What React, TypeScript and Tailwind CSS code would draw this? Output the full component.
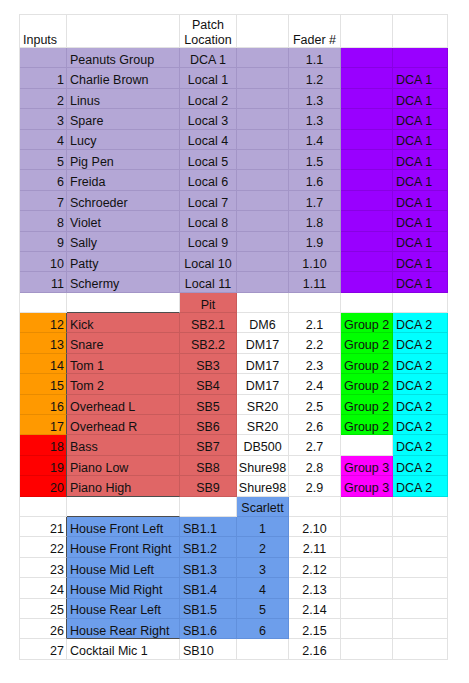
import React from "react";

type Cell = [string, string, string?, string?];

const fills: Record<string, string> = {
  W: "bg-white border-[#e2e2e2]",
  L: "bg-[#b4a7d6] border-[#a395c7]",
  P: "bg-[#9900ff] border-[#8800e3]",
  O: "bg-[#ff9900] border-[#e88b00]",
  R: "bg-[#ff0000] border-[#e60000]",
  r: "bg-[#e06666] border-[#c95b5b]",
  G: "bg-[#00ff00] border-[#00e200]",
  C: "bg-[#00ffff] border-[#00e2e2]",
  M: "bg-[#ff00ff] border-[#e200e2]",
  B: "bg-[#6d9eeb] border-[#6190dc]",
};

const aligns: Record<string, string> = {
  l: "justify-start pl-[3px]",
  r: "justify-end pr-[2px]",
  c: "justify-center",
};

const peanuts = ["Charlie Brown", "Linus", "Spare", "Lucy", "Pig Pen", "Freida", "Schroeder", "Violet", "Sally", "Patty", "Schermy"];
const peanutFaders = ["1.2", "1.3", "1.3", "1.4", "1.5", "1.6", "1.7", "1.8", "1.9", "1.10", "1.11"];

const pit = [
  { n: "12", name: "Kick", sb: "SB2.1", mic: "DM6", f: "2.1", c1: "O", grp: "Group 2", g: "G" },
  { n: "13", name: "Snare", sb: "SB2.2", mic: "DM17", f: "2.2", c1: "O", grp: "Group 2", g: "G" },
  { n: "14", name: "Tom 1", sb: "SB3", mic: "DM17", f: "2.3", c1: "O", grp: "Group 2", g: "G" },
  { n: "15", name: "Tom 2", sb: "SB4", mic: "DM17", f: "2.4", c1: "O", grp: "Group 2", g: "G" },
  { n: "16", name: "Overhead L", sb: "SB5", mic: "SR20", f: "2.5", c1: "O", grp: "Group 2", g: "G" },
  { n: "17", name: "Overhead R", sb: "SB6", mic: "SR20", f: "2.6", c1: "O", grp: "Group 2", g: "G" },
  { n: "18", name: "Bass", sb: "SB7", mic: "DB500", f: "2.7", c1: "R", grp: "", g: "W" },
  { n: "19", name: "Piano Low", sb: "SB8", mic: "Shure98", f: "2.8", c1: "R", grp: "Group 3", g: "M" },
  { n: "20", name: "Piano High", sb: "SB9", mic: "Shure98", f: "2.9", c1: "R", grp: "Group 3", g: "M" },
];

const house = ["House Front Left", "House Front Right", "House Mid Left", "House Mid Right", "House Rear Left", "House Rear Right"];

const dk = "border-r-[#4d4d4d]";
const dkb = "border-b-[#4d4d4d]";

const rows: Cell[][] = [
  [["", "L"], ["Peanuts Group", "L", "l"], ["DCA 1", "L", "c"], ["", "L"], ["1.1", "L", "c"], ["", "P"], ["", "P"]],
  ...peanuts.map((name, i): Cell[] => [
    [String(i + 1), "L", "r"],
    [name, "L", "l"],
    [`Local ${i + 1}`, "L", "c"],
    ["", "L"],
    [peanutFaders[i], "L", "c"],
    ["", "P"],
    ["DCA 1", "P", "l"],
  ]),
  [["", "W"], ["", "W", "l", dkb], ["Pit", "r", "c"], ["", "W"], ["", "W"], ["", "W"], ["", "W"]],
  ...pit.map((p, i): Cell[] => [
    [p.n, p.c1, "r", dk],
    [p.name, "r", "l", i === pit.length - 1 ? dkb : ""],
    [p.sb, "r", "c"],
    [p.mic, "W", "c"],
    [p.f, "W", "c"],
    [p.grp, p.g, "l"],
    ["DCA 2", "C", "l"],
  ]),
  [["", "W"], ["", "W", "l", dkb], ["", "W"], ["Scarlett", "B", "c"], ["", "W"], ["", "W"], ["", "W"]],
  ...house.map((name, i): Cell[] => [
    [String(21 + i), "W", "r", dk],
    [name, "B", "l", i === house.length - 1 ? dkb : ""],
    [`SB1.${i + 1}`, "B", "l"],
    [String(i + 1), "B", "c"],
    [`2.${10 + i}`, "W", "c"],
    ["", "W"],
    ["", "W"],
  ]),
  [["27", "W", "r"], ["Cocktail Mic 1", "W", "l"], ["SB10", "W", "l"], ["", "W"], ["2.16", "W", "c"], ["", "W"], ["", "W"]],
];

const cols = "grid grid-cols-[47px_113px_57px_52px_52px_52px_55px]";

export default function App() {
  return (
    <div className="min-h-screen bg-white pl-[19px] pt-[14px] font-['Liberation_Sans',Arial,sans-serif] text-[12.5px] text-[#111]">
      <div className="inline-block border-l border-t border-[#e2e2e2]">
        <div className={cols}>
          <div className="h-[33px] flex items-end pl-[3px] border-r border-b border-[#e2e2e2] leading-[14.5px]">Inputs</div>
          <div className="h-[33px] border-r border-b border-[#e2e2e2]" />
          <div className="h-[33px] flex items-end justify-center text-center border-r border-b border-[#e2e2e2] leading-[14.5px]">
            Patch
            <br />
            Location
          </div>
          <div className="h-[33px] border-r border-b border-[#e2e2e2]" />
          <div className="h-[33px] flex items-end justify-center border-r border-b border-[#e2e2e2] leading-[14.5px]">Fader #</div>
          <div className="h-[33px] border-r border-b border-[#e2e2e2]" />
          <div className="h-[33px] border-r border-b border-[#e2e2e2]" />
        </div>
        {rows.map((row, ri) => (
          <div key={ri} className={cols}>
            {row.map(([text, fill, align, extra], ci) => (
              <div
                key={ci}
                className={`h-[20.4px] flex items-end whitespace-nowrap overflow-hidden leading-[14.5px] border-r border-b ${fills[fill]} ${aligns[align ?? "c"]} ${extra ?? ""}`}
              >
                {text}
              </div>
            ))}
          </div>
        ))}
      </div>
    </div>
  );
}
